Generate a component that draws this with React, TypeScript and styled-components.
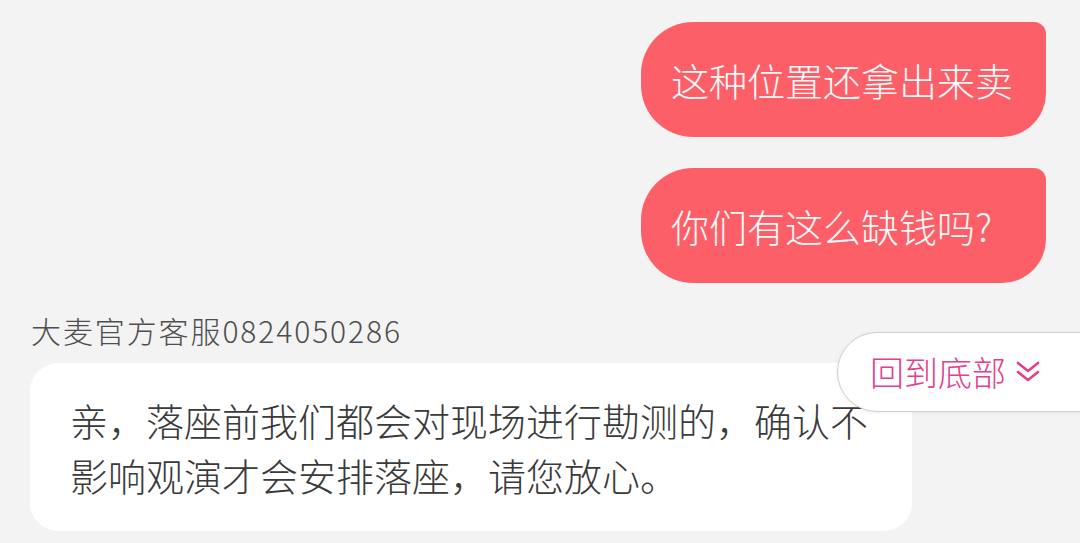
import React from "react";
import styled, { createGlobalStyle } from "styled-components";

const GlobalStyle = createGlobalStyle`
  html, body {
    margin: 0;
    padding: 0;
    background: #f3f3f3;
    overflow: hidden;
  }
  body {
    font-family: "Noto Sans CJK SC", "Noto Sans", sans-serif;
  }
`;

const Screen = styled.div`
  position: relative;
  width: 1080px;
  height: 543px;
  box-sizing: border-box;
  padding: 22px 34px 0 30px;
  display: flex;
  flex-direction: column;
  background: #f3f3f3;
  overflow: hidden;
`;

const OutgoingList = styled.div`
  display: flex;
  flex-direction: column;
  align-items: flex-end;
  gap: 31px;
`;

const OutgoingBubble = styled.div`
  width: 405px;
  height: 115px;
  box-sizing: border-box;
  padding-left: 30px;
  display: flex;
  align-items: center;
  background: #fd5f69;
  color: #fff8f8;
  font-size: 38px;
  font-weight: 300;
  line-height: 1;
  border-radius: 52px 12px 44px 52px;
`;

const SenderName = styled.div`
  margin-top: 29px;
  padding-left: 1px;
  font-size: 30px;
  font-weight: 300;
  line-height: 36px;
  color: #4e4e4e;
  letter-spacing: 1.9px;
`;

const IncomingBubble = styled.div`
  margin-top: 15px;
  width: 882px;
  box-sizing: border-box;
  padding: 29px 40px 29px 40px;
  background: #ffffff;
  border-radius: 28px;
  color: #3a3a3a;
  font-size: 38px;
  font-weight: 300;
  line-height: 55px;
`;

const BackToBottom = styled.button`
  position: absolute;
  left: 837px;
  top: 332px;
  width: 290px;
  height: 80px;
  box-sizing: border-box;
  padding: 0 0 0 32px;
  display: flex;
  align-items: center;
  gap: 9px;
  background: #ffffff;
  border: 1.5px solid #cfcfcf;
  border-radius: 40px;
  box-shadow: 0 1px 4px rgba(0, 0, 0, 0.06);
  color: #e2408c;
  font-family: "Noto Sans CJK SC", "Noto Sans", sans-serif;
  font-size: 34px;
  font-weight: 300;
  line-height: 1;
  cursor: pointer;
`;

const Chevrons = () => (
  <svg width="26" height="24" viewBox="0 0 26 24" fill="none">
    <path d="M3 3 L13 11 L23 3" stroke="#e2408c" strokeWidth="2.6" strokeLinecap="round" strokeLinejoin="round" />
    <path d="M3 12 L13 20 L23 12" stroke="#e2408c" strokeWidth="2.6" strokeLinecap="round" strokeLinejoin="round" />
  </svg>
);

export default function App() {
  return (
    <>
      <GlobalStyle />
      <Screen>
        <OutgoingList>
          <OutgoingBubble>这种位置还拿出来卖</OutgoingBubble>
          <OutgoingBubble>你们有这么缺钱吗?</OutgoingBubble>
        </OutgoingList>
        <SenderName>大麦官方客服0824050286</SenderName>
        <IncomingBubble>
          亲，落座前我们都会对现场进行勘测的，确认不影响观演才会安排落座，请您放心。
        </IncomingBubble>
        <BackToBottom>
          回到底部
          <Chevrons />
        </BackToBottom>
      </Screen>
    </>
  );
}
